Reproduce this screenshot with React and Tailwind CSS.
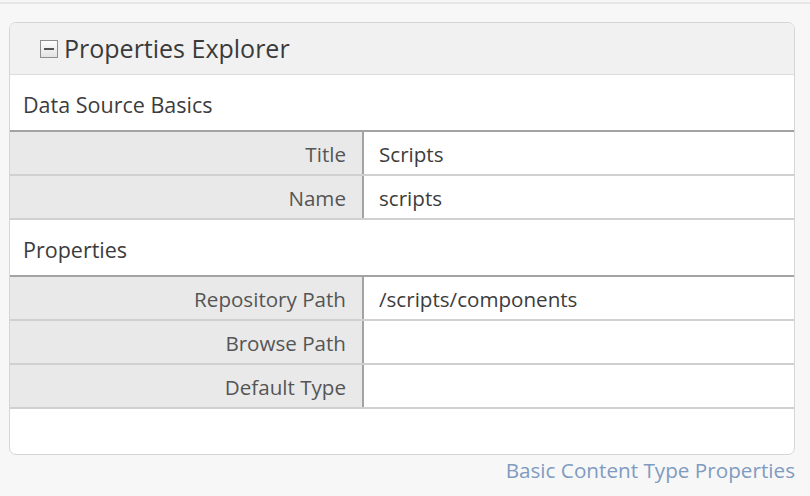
import React from "react";

const basics = [
  { label: "Title", value: "Scripts" },
  { label: "Name", value: "scripts" },
];

const props = [
  { label: "Repository Path", value: "/scripts/components" },
  { label: "Browse Path", value: "" },
  { label: "Default Type", value: "" },
];

const MinusBox = () => (
  <svg width="18" height="18" viewBox="0 0 18 18" className="shrink-0">
    <defs>
      <linearGradient id="mb" x1="0" y1="0" x2="0" y2="1">
        <stop offset="0" stopColor="#ffffff" />
        <stop offset="1" stopColor="#e2e2e2" />
      </linearGradient>
    </defs>
    <rect x="0.5" y="0.5" width="17" height="17" fill="url(#mb)" stroke="#8e8e8e" />
    <rect x="4" y="8" width="10" height="2" fill="#555" />
  </svg>
);

const Section = ({ title }) => (
  <div className="h-[55px] flex items-center pl-[13px] pt-[5px] text-[21.5px] text-[#3c3c3c]">{title}</div>
);

const Rows = ({ rows }) => (
  <div className="border-t-2 border-[#a3a3a3]">
    {rows.map((r) => (
      <div key={r.label} className="flex h-[44px] border-b-2 border-[#d0d0d0]">
        <div className="w-[354px] shrink-0 bg-[#e9e9e9] border-r-2 border-[#a3a3a3] flex items-center justify-end pr-[16px] pt-[3px] text-[20.6px] text-[#555]">
          {r.label}
        </div>
        <div className="flex-1 flex items-center pl-[15px] pt-[3px] text-[20.6px] text-[#3c3c3c]">{r.value}</div>
      </div>
    ))}
  </div>
);

export default function App() {
  return (
    <div
      className="min-h-[496px] bg-[#f7f7f7] pt-[2px]"
      style={{ fontFamily: '"Open Sans", "Noto Sans", sans-serif' }}
    >
      <div className="border-t-2 border-[#e6e6e6] pt-[18px] pl-[9px] pr-[15px]">
        <div className="bg-white border border-[#d6d6d6] rounded-[7px] overflow-hidden">
          <div className="h-[52px] bg-[#f1f1f1] border-b border-[#dcdcdc] flex items-center gap-[6px] pl-[30px] pt-[1px]">
            <MinusBox />
            <span className="text-[25px] text-[#3a3a3a]">Properties Explorer</span>
          </div>
          <Section title="Data Source Basics" />
          <Rows rows={basics} />
          <Section title="Properties" />
          <Rows rows={props} />
          <div className="h-[45px]" />
        </div>
        <div className="flex justify-end">
          <a className="text-[20.7px] text-[#7f9bc1] leading-[30px]">Basic Content Type Properties</a>
        </div>
      </div>
    </div>
  );
}
